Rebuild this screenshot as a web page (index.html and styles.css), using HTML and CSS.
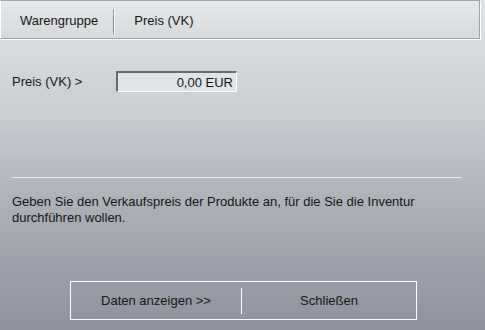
FILE: index.html
```html
<!DOCTYPE html>
<html lang="de">
<head>
    <meta charset="UTF-8">
    <title>Inventur</title>
    <link rel="stylesheet" href="styles.css">
</head>
<body>
    <div class="window">
        <div class="tabs">
            <div class="tab first">Warengruppe</div>
            <div class="tab-sep"></div>
            <div class="tab">Preis (VK)</div>
        </div>

        <div class="field-row">
            <label class="field-label" for="price">Preis (VK) &gt;</label>
            <div class="field-input" id="price">0,00 EUR</div>
        </div>

        <hr class="divider">

        <p class="hint">Geben Sie den Verkaufspreis der Produkte an, für die Sie die Inventur durchführen wollen.</p>

        <div class="buttons">
            <div class="btn show">Daten anzeigen &gt;&gt;</div>
            <div class="btn-sep"></div>
            <div class="btn">Schließen</div>
        </div>
    </div>
</body>
</html>
```

FILE: styles.css
```css
html, body {
    margin: 0;
    padding: 0;
}
body {
    width: 485px;
    height: 330px;
    overflow: hidden;
    font-family: "Liberation Sans", Arial, sans-serif;
    font-size: 13px;
    color: #161616;
    background: linear-gradient(#e0e3e6 0%, #c9ccd1 35%, #a9adb5 65%, #8d929e 100%);
}
.window {
    height: 330px;
    display: flex;
    flex-direction: column;
}
.tabs {
    width: 478px;
    height: 37px;
    border: 1px solid #a2a2a2;
    border-left-color: #fff;
    box-shadow: 1px 1px 0 #fff;
    background: linear-gradient(#e5e8ea, #d6dadd);
    display: flex;
    align-items: center;
}
.tab {
    padding: 0 19px;
    line-height: 16px;
    margin-top: 3px;
}
.tab.first {
    padding-right: 15px;
}
.tab-sep {
    width: 1px;
    height: 25px;
    margin-top: 3px;
    background: #8d8d8d;
    border-right: 1px solid #fff;
}
.field-row {
    display: flex;
    align-items: center;
    margin-top: 32px;
    padding-left: 12px;
}
.field-label {
    width: 104px;
}
.field-input {
    width: 115px;
    height: 18px;
    line-height: 19px;
    text-align: right;
    padding-right: 3px;
    border-top: 2px solid #6a6a6a;
    border-left: 2px solid #6a6a6a;
    border-right: 1px solid #fff;
    border-bottom: 1px solid #fff;
    background: #e1e4e6;
}
.divider {
    margin: 85px 0 0 12px;
    width: 450px;
    border: 0;
    height: 1px;
    background: #eceeef;
}
.hint {
    margin: 16px 12px 0 12px;
    line-height: 16px;
    width: 430px;
}
.buttons {
    margin: 55px 0 0 70px;
    width: 345px;
    height: 37px;
    border: 1px solid #fff;
    display: flex;
    align-items: center;
}
.btn {
    flex: 1;
    text-align: center;
    line-height: 16px;
}
.btn.show {
    flex: none;
    width: 170px;
}
.btn-sep {
    width: 1px;
    height: 26px;
    background: #fff;
}
```
